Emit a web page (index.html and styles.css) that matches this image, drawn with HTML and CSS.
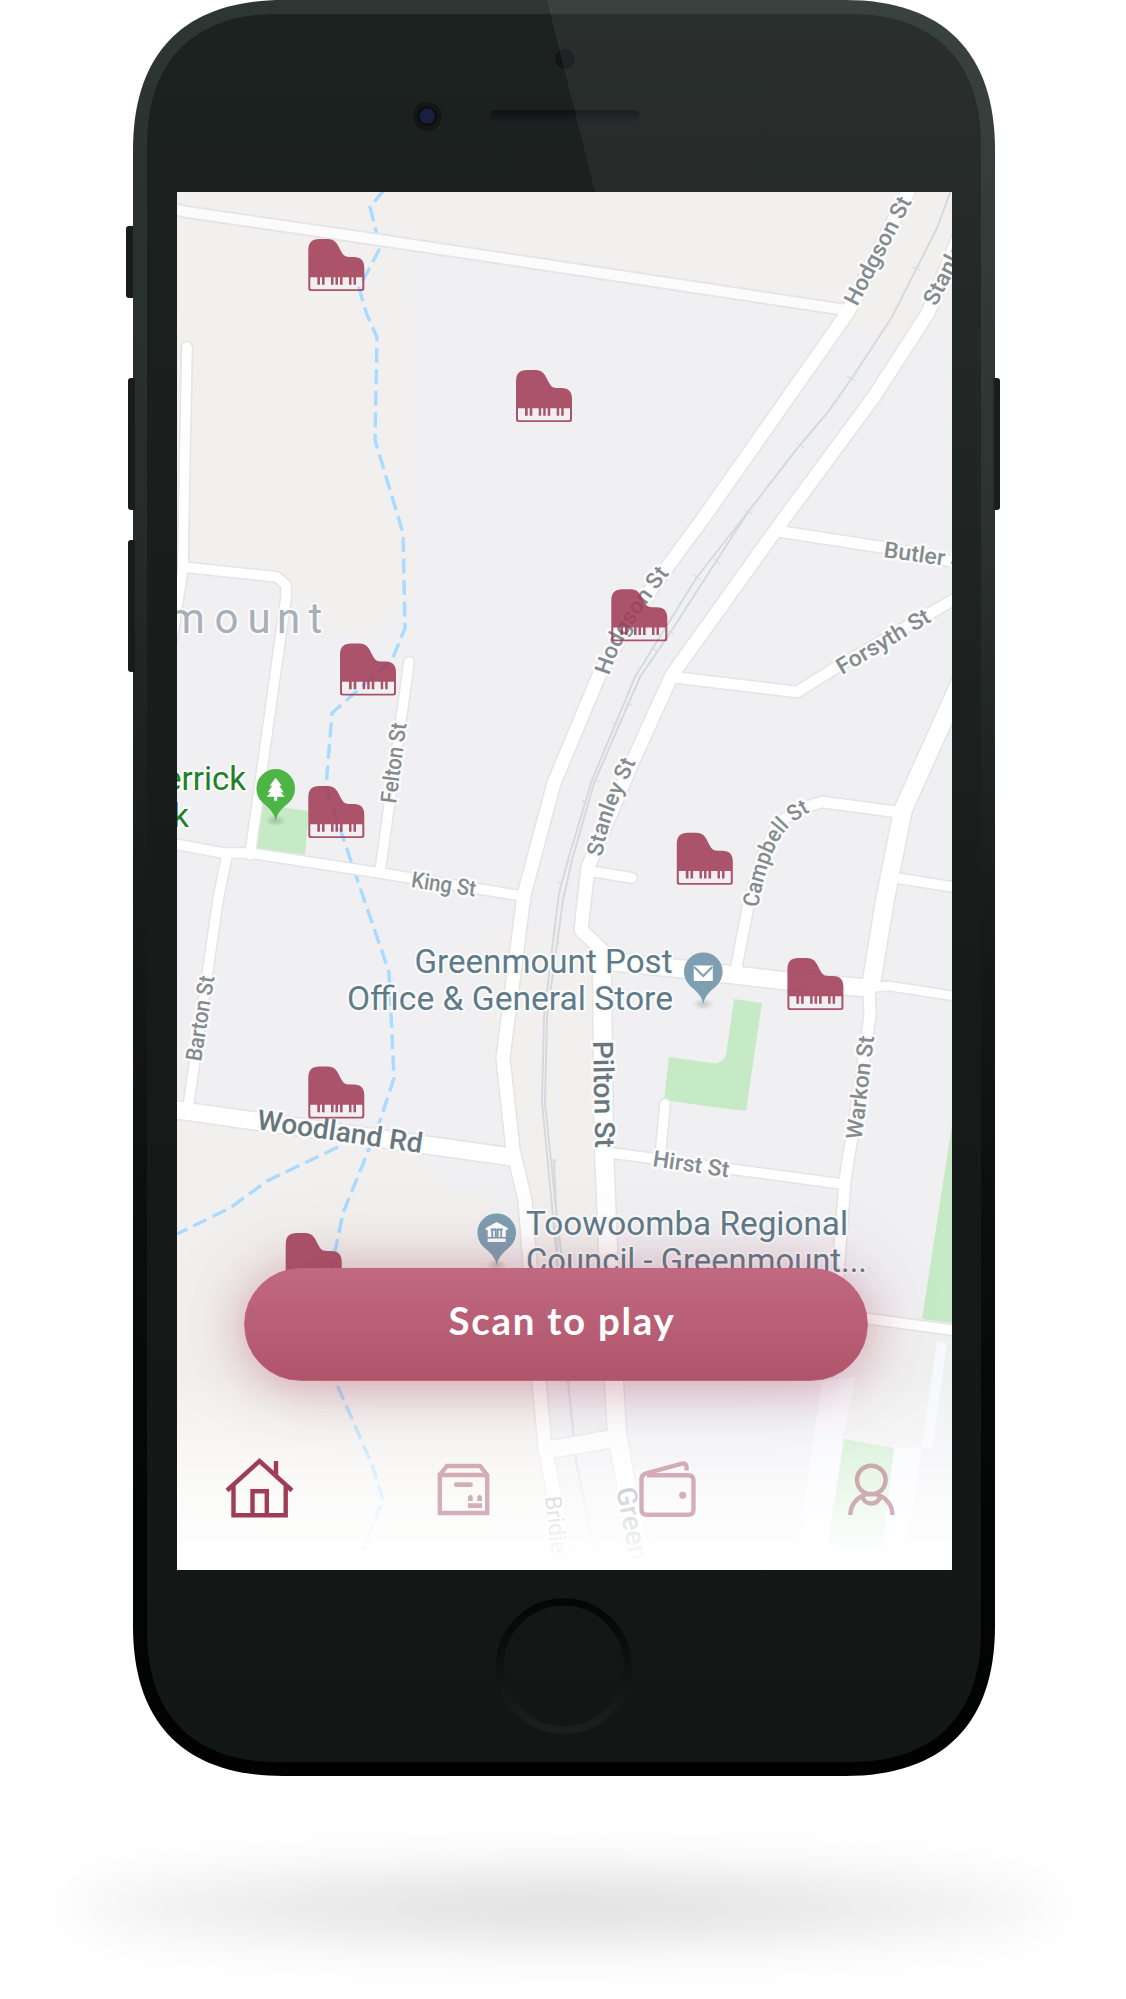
FILE: index.html
```html
<!DOCTYPE html>
<html lang="en">
<head>
<meta charset="utf-8">
<title>Scan to play</title>
<link rel="stylesheet" href="styles.css">
</head>
<body>
<main class="stage">
  <section class="phone">
    <svg class="shell" viewBox="124 0 878 1776" width="878" height="1776" aria-hidden="true">
      <defs>
        <linearGradient id="frame" x1="0" y1="0" x2="0" y2="1">
          <stop offset="0" stop-color="#2d3633"/><stop offset=".28" stop-color="#262d2b"/>
          <stop offset=".42" stop-color="#1c2220"/><stop offset=".55" stop-color="#141817"/>
          <stop offset=".68" stop-color="#0d0f0e"/><stop offset=".85" stop-color="#040505"/><stop offset="1" stop-color="#020202"/>
        </linearGradient>
        <linearGradient id="face" x1="0" y1="0" x2="0" y2="1">
          <stop offset="0" stop-color="#1c2220"/><stop offset="1" stop-color="#121615"/>
        </linearGradient>
        <linearGradient id="glare" x1="0" y1="0" x2="0" y2="1">
          <stop offset="0" stop-color="#fff" stop-opacity=".06"/><stop offset="1" stop-color="#fff" stop-opacity="0"/>
        </linearGradient>
        <linearGradient id="slot" x1="0" y1="0" x2="0" y2="1">
          <stop offset="0" stop-color="#0e1213"/><stop offset="1" stop-color="#1a1f21"/>
        </linearGradient>
        <linearGradient id="ring" x1="0" y1="0" x2="0" y2="1">
          <stop offset="0" stop-color="#050606"/><stop offset=".35" stop-color="#0b0e0d"/>
          <stop offset=".65" stop-color="#121615"/><stop offset="1" stop-color="#1b201f"/>
        </linearGradient>
        <clipPath id="body"><path d="M133 150C133 52 185 0 283 0H845C943 0 995 52 995 150V1626C995 1724 943 1776 845 1776H283C185 1776 133 1724 133 1626Z"/></clipPath>
      </defs>
      <g fill="#181d1c">
        <rect x="126" y="226" width="14" height="72" rx="3"/>
        <rect x="128" y="378" width="14" height="132" rx="3"/>
        <rect x="128" y="540" width="14" height="132" rx="3"/>
        <rect x="986" y="378" width="14" height="132" rx="3"/>
      </g>
      <path fill="url(#frame)" d="M133 150C133 52 185 0 283 0H845C943 0 995 52 995 150V1626C995 1724 943 1776 845 1776H283C185 1776 133 1724 133 1626Z"/>
      <path fill="url(#face)" d="M147 144C147 61 194 14 277 14H851C934 14 981 61 981 144V1632C981 1715 934 1762 851 1762H277C194 1762 147 1715 147 1632Z"/>
      <circle cx="565" cy="59" r="10" fill="#121617"/>
      <rect x="489" y="110" width="151" height="13" rx="6.5" fill="url(#slot)"/>
      <circle cx="427.3" cy="116.3" r="14.5" fill="#131716"/>
      <circle cx="427.3" cy="116.3" r="10" fill="#0b0d10"/>
      <circle cx="427.3" cy="116.3" r="7.7" fill="#1a1f3f"/>
      <g fill="#181d1c">
        <rect x="133" y="378" width="2" height="132"/><rect x="133" y="540" width="2" height="132"/><rect x="993" y="378" width="2" height="132"/>
      </g>
      <path clip-path="url(#body)" fill="url(#glare)" d="M547 0H995V1000H797Z"/>
      <circle cx="563.7" cy="1666" r="64" fill="none" stroke="url(#ring)" stroke-width="7.5"/>
    </svg>

    <div class="screen">
      <svg class="map" viewBox="177 192 775 1378" width="775" height="1378">
        <defs>
          <path id="track" d="M170 208L187 212L373 239L620 276L846 310"/>
          <path id="hodgson" d="M908 192L848 312L702 520L665 570L635 612L600 673L554 783L524 895L503 1058L513 1150L525 1200L539 1382L545 1446L568 1572"/>
          <path id="stanley" d="M965 222L928 313L873 398L783 520L672 675L632 763L588 867L581 930L602 950"/>
          <path id="pilton" d="M602 955V973L604 1147L608 1250L614 1382L617 1433L624 1473L644 1572"/>
          <path id="post" d="M604 961L683 969L787 981L868 988"/>
          <path id="east" d="M866 988L889 986L960 997"/>
          <path id="warkonN" d="M960 683L903 810L885 900L871 985"/>
          <path id="warkon" d="M869 985L870 1015L860 1087L845 1180L836 1300"/>
          <path id="small" d="M777 531L887 548L960 563M672 677L797 692L837 667L960 596M735 974L748 907L761 860L777 825L796 810L822 802L905 813"/>
          <path id="lanes" d="M896 878L960 888M590 871L632 878M605 1152L842 1184M660 1158L665 1104M409 662L380 872M187 347L184 500L183 568L172 640M183 567L277 577L286 585V598L250 855M170 843L223 853H250L380 873L522 896M227 855L218 900L188 1108M840 1315L960 1331"/>
          <path id="woodland" d="M170 1109L512 1157"/>
          <path id="cross" d="M547 1450L616 1438"/>
          <path id="lHodgson" d="M609 676Q618 647 633 624T669 574"/>
          <path id="lStanley" d="M602 857Q607 826 620 797T639 755"/>
          <path id="lCampbell" d="M758 908Q764 872 775 848Q785 824 812 811"/>
          <path id="piano" fill-rule="evenodd" d="M0 11Q0 0 11 0H19.500C26 0 28.500 4 30.500 8C34 15 35.500 18 41 18H45.500Q56 18 56 29V49.500Q56 52 53.500 52H2.500Q0 52 0 49.500ZM2 38.200V49Q2 50.300 3.300 50.300H52.700Q54 50.300 54 49V38.200H47.700V45.800H45.200V38.200H43.200V45.800H40.700V38.200H34.300V45.800H31.700V38.200H29.700V45.800H27.200V38.200H25.200V45.800H22.700V38.200H16.300V45.800H13.700V38.200H11.700V45.800H9V38.200Z"/>
          <path id="drop" d="M0 32C-2 22-8 19-14 13A19.300 19.300 0 1 1 14 13C8 19 2 22 0 32Z"/>
          <radialGradient id="pinShade"><stop offset="0" stop-color="#000" stop-opacity=".18"/><stop offset="1" stop-color="#000" stop-opacity="0"/></radialGradient>
          <linearGradient id="fade" x1="0" y1="1375" x2="0" y2="1565" gradientUnits="userSpaceOnUse">
            <stop offset="0" stop-color="#fff" stop-opacity="0"/><stop offset=".35" stop-color="#fff" stop-opacity=".42"/>
            <stop offset=".65" stop-color="#fff" stop-opacity=".72"/><stop offset="1" stop-color="#fff"/>
          </linearGradient>
        </defs>

        <rect class="block" x="177" y="192" width="775" height="1378"/>
        <g class="open">
          <path d="M177 192H952V330L913 353L853 327L620 276L408 244L411 318V500L415 515V590L380 623L353 639L320 621L286 590L277 577L177 568Z"/>
          <path class="block" d="M952 305L925 352H952Z"/>
          <path d="M491 932H602V1300H520L490 1193H448L423 1155L400 1140L177 1109V1570H550L500 1100L483 1017Z"/>
          <path class="block" d="M423 1150L510 1155L520 1193H448Z"/>
        </g>
        <path fill="#f0f0f0" d="M868 1322L937 1336L922 1447L843 1438Z"/>
        <path class="pale" d="M822 1382L856 1376L843 1438L828 1544L882 1550L894 1448L922 1447L906 1555L797 1550ZM937 1340L947 1343L932 1449L922 1447Z"/>
        <path class="park" d="M263 805L309 811L305 854.500L257 849ZM734 999L762 1003L746 1111L713 1107L664 1100L669 1057L716 1063.500Q725 1061 726 1055ZM952 1125L922 1319L952 1323ZM844 1439L894 1448L882 1550L828 1544Z"/>

        <g class="stream">
          <path d="M384 190L370 207L377 235L379 250L359 288L367 315L377 337L375 440L403 533L405 628L392 660L332 713L326 787L353 867L389 972L394 1078L378 1127L343 1213L325 1300V1355L335 1380L373 1467L383 1500L363 1550"/>
          <path d="M338 1147L267 1181L230 1208L177 1234"/>
        </g>
        <g class="rail">
          <path d="M951 190L937 228L892 317L852 378L828 412L800 445L748 512L697 577L687 593L635 677L592 780L570 853L559 893L552 950L544 1017L542 1102L553 1217L568 1382L577 1467L599 1570"/>
          <path d="M748 512L717 560L670 633L640 677L594 783L572 860L563 900L547 1017L545 1103L557 1217L562 1260M554 1160L558 1260"/>
          <path class="ties" d="M912 267l8 3M847 376l8 5M797 443l7 5M745 510l7 4M694 575l6 5M714 559l6 5M668 631l6 3M651 648l6 3M626 702l6 3M612 722l6 3M593 780l6 2M582 801l6 2M569 861l4 2M557 882l4 1M556 943l4 1M543 1048l4 1M543 1111l4 1M552 1160h5M565 1382h6"/>
        </g>

        <g class="casing">
          <use href="#track" stroke-width="13.500"/><use href="#hodgson" stroke-width="16"/><use href="#stanley" stroke-width="16"/>
          <use href="#post" stroke-width="20"/><use href="#pilton" stroke-width="21"/><use href="#east" stroke-width="11.500"/>
          <use href="#warkonN" stroke-width="20.500"/><use href="#warkon" stroke-width="14"/><use href="#small" stroke-width="13.500"/>
          <use href="#lanes" stroke-width="12.500"/><use href="#woodland" stroke-width="20"/><use href="#cross" stroke-width="20"/>
        </g>
        <g class="road">
          <use href="#track" stroke-width="10" stroke="#fbfbfb"/><use href="#hodgson" stroke-width="13"/><use href="#stanley" stroke-width="13"/>
          <use href="#post" stroke-width="17"/><use href="#pilton" stroke-width="18"/><use href="#east" stroke-width="8.500"/>
          <use href="#warkonN" stroke-width="17.500"/><use href="#warkon" stroke-width="11"/><use href="#small" stroke-width="10.500"/>
          <use href="#lanes" stroke-width="9.500"/><use href="#woodland" stroke-width="17"/><use href="#cross" stroke-width="17"/>
        </g>

        <g class="street">
          <text transform="translate(857 307) rotate(-62.500)" textLength="119" lengthAdjust="spacingAndGlyphs">Hodgson St</text>
          <text transform="translate(936 307) rotate(-63)" textLength="104" lengthAdjust="spacingAndGlyphs">Stanley St</text>
          <text textLength="120" lengthAdjust="spacingAndGlyphs"><textPath href="#lHodgson">Hodgson St</textPath></text>
          <text textLength="101" lengthAdjust="spacingAndGlyphs"><textPath href="#lStanley">Stanley St</textPath></text>
          <text textLength="114" lengthAdjust="spacingAndGlyphs"><textPath href="#lCampbell">Campbell St</textPath></text>
          <text transform="translate(883 557) rotate(8)" textLength="89" lengthAdjust="spacingAndGlyphs">Butler St</text>
          <text transform="translate(842 675) rotate(-31)" textLength="105" lengthAdjust="spacingAndGlyphs">Forsyth St</text>
          <text transform="translate(396 804) rotate(-82.500)" textLength="81" lengthAdjust="spacingAndGlyphs">Felton St</text>
          <text transform="translate(410.500 887) rotate(8.500)" textLength="65" lengthAdjust="spacingAndGlyphs">King St</text>
          <text transform="translate(201 1062) rotate(-81)" textLength="86" lengthAdjust="spacingAndGlyphs">Barton St</text>
          <text transform="translate(861.500 1140) rotate(-83)" textLength="104" lengthAdjust="spacingAndGlyphs">Warkon St</text>
          <text transform="translate(652 1166) rotate(8.500)" textLength="77" lengthAdjust="spacingAndGlyphs">Hirst St</text>
          <text transform="translate(545 1497) rotate(83)" font-weight="400">Bridies Rd</text>
        </g>
        <g class="street major">
          <text transform="translate(256 1129) rotate(8.300)" textLength="167" lengthAdjust="spacingAndGlyphs">Woodland Rd</text>
          <text transform="translate(593 1041) rotate(88.800)" textLength="107" lengthAdjust="spacingAndGlyphs">Pilton St</text>
          <text transform="translate(616 1489) rotate(79)">Greenmount</text>
        </g>
        <text class="suburb" x="168 214.500 247.500 277 308.500" y="632.500">mount</text>
        <text class="poi parkname" x="246" y="790">Derrick</text>
        <text class="poi parkname" x="189" y="827">Park</text>
        <text class="poi" x="414.500" y="973" textLength="258" lengthAdjust="spacingAndGlyphs">Greenmount Post</text>
        <text class="poi" x="347" y="1010" textLength="326" lengthAdjust="spacingAndGlyphs">Office &amp; General Store</text>
        <text class="poi" x="526" y="1234.500" textLength="322" lengthAdjust="spacingAndGlyphs">Toowoomba Regional</text>
        <text class="poi" x="526" y="1272" textLength="341" lengthAdjust="spacingAndGlyphs">Council - Greenmount...</text>

        <g transform="translate(275.700 788.700)">
          <ellipse cy="32" rx="11" ry="6" fill="url(#pinShade)"/>
          <use href="#drop" fill="#4db546"/>
          <path fill="#fff" d="M0-11L6-3H3.500L8 3.500H5L9 8H1.500V12H-1.500V8H-9L-5 3.500H-8L-3.500-3H-6Z"/>
        </g>
        <g transform="translate(703.300 972)">
          <ellipse cy="32" rx="11" ry="6" fill="url(#pinShade)"/>
          <use href="#drop" fill="#7e9fb1"/>
          <rect x="-9.500" y="-6.500" width="19" height="15.500" fill="#fff"/>
          <path d="M-9-5L0 4L9-5" fill="none" stroke="#7e9fb1" stroke-width="2"/>
        </g>
        <g transform="translate(496.700 1233)">
          <ellipse cy="32" rx="11" ry="6" fill="url(#pinShade)"/>
          <use href="#drop" fill="#7e9fb1"/>
          <path fill="#fff" d="M0-11L11-5V-3H9V4H-9V-3H-11V-5ZM-9 5.500H9V9H-9Z"/>
          <path d="M-6-3.500H-1V4M-4.500-3V4M6-3.500H1V4M4.500-3V4" fill="none" stroke="#7e9fb1" stroke-width="1.800"/>
        </g>

        <g class="pianos">
          <use href="#piano" x="308.300" y="239"/><use href="#piano" x="516" y="370"/><use href="#piano" x="611.300" y="589.200"/>
          <use href="#piano" x="340" y="643.500"/><use href="#piano" x="308.300" y="786"/><use href="#piano" x="676.800" y="832.700"/>
          <use href="#piano" x="787.400" y="958"/><use href="#piano" x="308.300" y="1066.500"/><use href="#piano" x="285.700" y="1233"/>
        </g>
        <rect x="177" y="1370" width="775" height="200" fill="url(#fade)"/>
      </svg>

      <div class="controls">
        <button class="scan" type="button">Scan to play</button>
        <nav class="tabs">
          <a class="tab active" aria-label="Home"><svg viewBox="225 1457 70 61" width="70" height="61"><path d="M227 1490.500L259.500 1461L292 1490.500M233.500 1486V1515.300H285.700V1486M252.500 1514V1491.300H266.800V1514M276 1461V1475"/></svg></a>
          <a class="tab" aria-label="Shop"><svg viewBox="437 1457 53 61" width="53" height="61"><path d="M439.800 1475L447 1466H480L487.200 1475V1513H439.800V1475H487.200"/><path class="solid" d="M456.300 1482.300H470.500A2.300 2.300 0 0 1 470.500 1487H456.300A2.300 2.300 0 0 1 456.300 1482.300ZM468 1503.200H482V1508H468ZM468 1501V1496.500L470.300 1494.500L472.700 1496.500V1501ZM477.300 1501V1496.500L479.700 1494.500L482 1496.500V1501Z"/></svg></a>
          <a class="tab" aria-label="Wallet"><svg viewBox="639 1457 57 61" width="57" height="61"><path d="M647 1475.300H688Q693.500 1475.300 693.500 1480.500V1509.500Q693.500 1514.800 688 1514.800H647Q641.500 1514.800 641.500 1509.500V1479.500Q641.500 1474.500 646 1473.300L681 1463.800Q686.500 1462.500 686.500 1467V1470.500"/><circle class="solid" cx="682.700" cy="1495.300" r="3.500"/></svg></a>
          <a class="tab" aria-label="Profile"><svg viewBox="847 1457 49 61" width="49" height="61"><circle cx="871.300" cy="1480" r="14.300"/><path d="M850.300 1515A21 21 0 0 1 892.500 1515M861.500 1495Q864 1503.500 871.300 1503.500T881.200 1495"/></svg></a>
        </nav>
      </div>
    </div>
  </section>
  <div class="ground"></div>
</main>
</body>
</html>
```
FILE: styles.css
```css
* { box-sizing: border-box; }

body {
  margin: 0;
  background: #fff;
  font-family: Lato, "Liberation Sans", sans-serif;
}

.stage {
  width: 1126px;
  height: 1999px;
  overflow: hidden;
  display: flex;
  flex-direction: column;
}

.phone {
  position: relative;
  flex: none;
  width: 862px;
  height: 1776px;
  margin-left: 133px;
  padding: 192px 43px 206px 44px;
}

.shell {
  position: absolute;
  top: 0;
  left: -9px;
}

.screen {
  position: relative;
  width: 775px;
  height: 1378px;
  overflow: hidden;
  background: #fff;
}

.map {
  position: absolute;
  inset: 0;
  font-family: Roboto, "Liberation Sans", sans-serif;
}

.block { fill: #f0f0f3; }
.open { fill: #f2f0ee; }
.pale { fill: #f7f8fd; }
.park { fill: #c6eac6; }

.stream {
  fill: none;
  stroke: #a9daff;
  stroke-width: 3.4;
  stroke-dasharray: 15 6.5;
}

.rail {
  fill: none;
  stroke: #d5d9dd;
  stroke-width: 2;
}

.ties {
  stroke: #dadde1;
  stroke-width: 1.4;
}

.casing,
.road {
  fill: none;
  stroke-linecap: round;
  stroke-linejoin: round;
}

.casing { stroke: #e4e4e5; }
.road { stroke: #fff; }

.street,
.suburb,
.poi {
  paint-order: stroke;
  stroke: #fbfbfc;
  stroke-width: 5px;
  stroke-linejoin: round;
}

.street {
  fill: #848b8e;
  font-size: 22.5px;
  font-weight: 500;
}

.major {
  fill: #68777c;
  font-size: 28px;
}

.suburb {
  fill: #a8afb9;
  font-size: 42px;
  stroke-width: 4px;
}

.poi {
  fill: #5f7b89;
  font-size: 33px;
  stroke-width: 4px;
}

.parkname {
  fill: #23802a;
  text-anchor: end;
}

.pianos {
  fill: #9f3c56;
  fill-opacity: .88;
}

.controls {
  position: relative;
  height: 100%;
  display: flex;
  flex-direction: column;
  justify-content: flex-end;
}

.scan {
  width: 624px;
  height: 113px;
  margin: 0 0 76px 67px;
  padding: 0 0 9px 12px;
  border: 1px solid #bf657c;
  border-radius: 57px;
  background: linear-gradient(#c06981, #b0546a);
  box-shadow: 0 4px 52px rgba(176, 60, 90, .42), 0 0 100px rgba(90, 90, 90, .1);
  color: #fff;
  font: 700 38.5px Lato, "Liberation Sans", sans-serif;
  letter-spacing: 1.7px;
}

.tabs {
  height: 113px;
  padding: 0 56px 0 48px;
  display: flex;
}

.tab { opacity: .4; }
.tab.active { opacity: 1; }
.tab:nth-child(2) { margin-left: 142px; }
.tab:nth-child(3) { margin-left: 149px; }
.tab:nth-child(4) { margin-left: 151px; }

.tab svg {
  display: block;
  fill: none;
  stroke: #9f3c56;
  stroke-width: 4.4;
}

.tab .solid {
  fill: #9f3c56;
  stroke: none;
}

.ground {
  flex: none;
  width: 990px;
  height: 76px;
  margin: 93px 0 0 68px;
  border-radius: 50%;
  background: radial-gradient(closest-side, rgba(0, 0, 0, .16), rgba(0, 0, 0, .06));
  filter: blur(26px);
}
```
